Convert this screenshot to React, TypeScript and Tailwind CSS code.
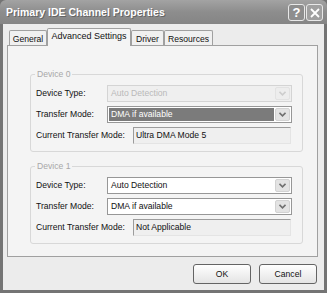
import React from "react";

const font = { fontFamily: "'Liberation Sans', Arial, sans-serif" };

function Arrow({ disabled }: { disabled?: boolean }) {
  return (
    <div
      className={`w-[15px] h-[13px] mr-[1px] rounded-[2px] border flex items-center justify-center ${
        disabled ? "bg-[#ededed] border-[#e2e2e2]" : "bg-[#e3e3e3] border-[#d2d2d2]"
      }`}
    >
      <svg width="7" height="5" viewBox="0 0 7 5">
        <path
          d="M0.5 0.8 L3.5 3.8 L6.5 0.8"
          fill="none"
          stroke={disabled ? "#cdcdcd" : "#707070"}
          strokeWidth="1.6"
        />
      </svg>
    </div>
  );
}

function Combo({ value, disabled, selected }: { value: string; disabled?: boolean; selected?: boolean }) {
  return (
    <div
      className={`w-[185px] h-[17px] border flex items-center ${
        disabled ? "border-[#d4d4d4] bg-[#efefef]" : "border-[#979797] bg-white"
      }`}
    >
      <div className="flex-1 h-full p-[1px] flex">
        <div
          className={`flex-1 flex items-center pl-[2px] ${
            selected ? "bg-[#7b7b7b] text-white" : disabled ? "text-[#b9b9b9]" : "text-[#111]"
          }`}
        >
          {value}
        </div>
      </div>
      <Arrow disabled={disabled} />
    </div>
  );
}

function TextBox({ value }: { value: string }) {
  return (
    <div className="w-[158px] h-[17px] border border-t-[#9c9c9c] border-l-[#9c9c9c] border-r-[#e4e4e4] border-b-[#e4e4e4] bg-[#efefef] flex items-center pl-[2px] text-[#111]">
      {value}
    </div>
  );
}

function Row({ label, children, w }: { label: string; children: React.ReactNode; w: string }) {
  return (
    <div className="flex items-center h-[17px]">
      <div className={`${w} text-[#111] whitespace-nowrap`}>{label}</div>
      {children}
    </div>
  );
}

function Group({ title, disabled }: { title: string; disabled?: boolean }) {
  return (
    <div className="relative ml-[22px] w-[273px] border border-[#d8d8d8] rounded-[3px] pt-[10px] pb-[7px] pl-[5px] flex flex-col gap-[4px]">
      <div className="absolute -top-[7px] left-[4px] px-[2px] bg-[#f4f4f4] text-[#a8a8a8] leading-[12px]">
        {title}
      </div>
      <Row label="Device Type:" w="w-[71px]">
        <Combo value="Auto Detection" disabled={disabled} />
      </Row>
      <Row label="Transfer Mode:" w="w-[71px]">
        <Combo value="DMA if available" selected={disabled} />
      </Row>
      <Row label="Current Transfer Mode:" w="w-[97px]">
        <TextBox value={disabled ? "Ultra DMA Mode 5" : "Not Applicable"} />
      </Row>
    </div>
  );
}

export default function App() {
  const tabs = [
    { t: "General", w: "w-[38px]" },
    { t: "Advanced Settings", w: "w-[84px]" },
    { t: "Driver", w: "w-[33px]" },
    { t: "Resources", w: "w-[49px]" },
  ];
  return (
    <div
      className="w-[327px] h-[293px] bg-[#747474] flex flex-col overflow-hidden text-[8.6px] leading-none"
      style={font}
    >
      {/* Title bar */}
      <div className="h-[24px] shrink-0 bg-gradient-to-b from-[#a3a3a3] via-[#8d8d8d] to-[#858585] flex items-center pl-[6px] pr-[4px] rounded-t-[6px]">
        <div
          className="flex-1 text-white font-bold text-[10.5px] pt-[1px]"
          style={{ textShadow: "1px 1px 0 #646464" }}
        >
          Primary IDE Channel Properties
        </div>
        <div className="flex gap-[1px] pt-[1px]">
          <div className="w-[17px] h-[17px] rounded-[3px] border border-[#e8e8e8] bg-[#8e8e8e] text-white font-bold text-[13px] flex items-center justify-center">
            ?
          </div>
          <div className="w-[17px] h-[17px] rounded-[3px] border border-[#e8e8e8] bg-[#a0a0a0] flex items-center justify-center">
            <svg width="10" height="10" viewBox="0 0 10 10">
              <path d="M1 1 L9 9 M9 1 L1 9" stroke="white" strokeWidth="1.8" />
            </svg>
          </div>
        </div>
      </div>

      {/* Body */}
      <div className="flex-1 ml-[3px] mr-[3px] mb-[3px] bg-[#ececec] flex flex-col pl-[4px] pt-[6px]">
        {/* Tabs */}
        <div className="flex items-end h-[15px] pl-[2px] relative z-10">
          {tabs.map(({ t, w }, i) =>
            i === 1 ? (
              <div
                key={t}
                className={`${w} h-[18px] -mb-[1px] bg-[#f4f4f4] border border-[#a0a0a0] border-b-0 rounded-t-[2px] text-[#111] text-[9px] flex items-center justify-center pb-[3px]`}
              >
                {t}
              </div>
            ) : (
              <div
                key={t}
                className={`${w} h-[15px] bg-[#f0f0f0] border border-[#a0a0a0] border-b-0 rounded-t-[2px] text-[#111] flex items-center justify-center pt-[2px]`}
              >
                {t}
              </div>
            )
          )}
        </div>

        {/* Panel */}
        <div className="w-[311px] h-[212px] bg-[#f4f4f4] border border-[#a0a0a0] pt-[28px] flex flex-col gap-[14px]">
          <Group title="Device 0" disabled />
          <Group title="Device 1" />
        </div>

        {/* Buttons */}
        <div className="w-[311px] flex justify-end gap-[8px] pt-[7px] pr-[1px]">
          {["OK", "Cancel"].map((b) => (
            <div
              key={b}
              className="w-[58px] h-[20px] rounded-[3px] border border-[#646464] bg-gradient-to-b from-white to-[#e4e4e4] text-[#111] flex items-center justify-center"
            >
              {b}
            </div>
          ))}
        </div>
      </div>
    </div>
  );
}
